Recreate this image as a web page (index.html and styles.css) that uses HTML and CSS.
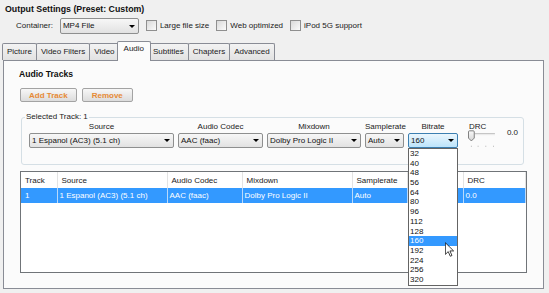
FILE: index.html
```html
<!DOCTYPE html>
<html>
<head>
    <title>Output Settings</title>
    <link rel="stylesheet" href="styles.css">
</head>
<body>
    <h1 class="section-title">Output Settings (Preset: Custom)</h1>
    <div class="container-row">
        <span class="field-label">Container:</span>
        <div class="combo combo-container">MP4 File</div>
        <label class="check"><span class="check-box"></span>Large file size</label>
        <label class="check"><span class="check-box"></span>Web optimized</label>
        <label class="check"><span class="check-box"></span>iPod 5G support</label>
    </div>

    <div class="tabs">
        <div class="tab">Picture</div>
        <div class="tab">Video Filters</div>
        <div class="tab">Video</div>
        <div class="tab active">Audio</div>
        <div class="tab">Subtitles</div>
        <div class="tab">Chapters</div>
        <div class="tab">Advanced</div>
    </div>

    <div class="tab-panel">
        <h2 class="panel-title">Audio Tracks</h2>
        <div class="track-buttons">
            <button class="btn">Add Track</button>
            <button class="btn btn-remove">Remove</button>
        </div>

        <fieldset class="track-group">
            <legend>Selected Track: 1</legend>
            <div class="track-fields">
                <div class="field field-source">
                    <span class="field-caption">Source</span>
                    <div class="combo">1 Espanol (AC3) (5.1 ch)</div>
                </div>
                <div class="field field-codec">
                    <span class="field-caption">Audio Codec</span>
                    <div class="combo">AAC (faac)</div>
                </div>
                <div class="field field-mixdown">
                    <span class="field-caption">Mixdown</span>
                    <div class="combo">Dolby Pro Logic II</div>
                </div>
                <div class="field field-rate">
                    <span class="field-caption">Samplerate</span>
                    <div class="combo">Auto</div>
                </div>
                <div class="field field-bitrate">
                    <span class="field-caption">Bitrate</span>
                    <div class="combo-wrap">
                        <div class="combo combo-open">160</div>
                        <ul class="dropdown">
                            <li>32</li>
                            <li>40</li>
                            <li>48</li>
                            <li>56</li>
                            <li>64</li>
                            <li>80</li>
                            <li>96</li>
                            <li>112</li>
                            <li>128</li>
                            <li class="selected">160</li>
                            <li>192</li>
                            <li>224</li>
                            <li>256</li>
                            <li>320</li>
                        </ul>
                        <svg class="cursor" width="9" height="15" viewBox="0 0 12 19">
                            <path d="M0.5 0.5 V16 L4.3 12.3 L7 18.5 L9.3 17.5 L6.6 11.4 H11.5 Z" fill="#fff" stroke="#000" stroke-width="1"/>
                        </svg>
                    </div>
                </div>
                <div class="field field-drc">
                    <span class="field-caption">DRC</span>
                    <div class="drc-row">
                        <svg width="30" height="19" viewBox="0 0 30 19">
                            <defs>
                                <linearGradient id="thumbFill" x1="0" y1="0" x2="0" y2="1">
                                    <stop offset="0" stop-color="#fafafa"/>
                                    <stop offset="1" stop-color="#d6d6d6"/>
                                </linearGradient>
                            </defs>
                            <line x1="7" y1="3.5" x2="28" y2="3.5" stroke="#b4b4b4"/>
                            <line x1="7" y1="4.5" x2="28" y2="4.5" stroke="#ebebeb"/>
                            <path d="M0.5 1.5 Q0.5 0.5 1.5 0.5 H5.5 Q6.5 0.5 6.5 1.5 V8 L3.5 11 L0.5 8 Z" fill="url(#thumbFill)" stroke="#7a7a7a"/>
                            <rect x="3" y="16" width="1" height="1" fill="#b0b0b0"/>
                            <rect x="10" y="16" width="1" height="1" fill="#b0b0b0"/>
                            <rect x="18" y="16" width="1" height="1" fill="#b0b0b0"/>
                            <rect x="26" y="16" width="1" height="1" fill="#b0b0b0"/>
                        </svg>
                        <span class="drc-value">0.0</span>
                    </div>
                </div>
            </div>
        </fieldset>

        <div class="track-list">
            <table>
                <colgroup>
                    <col style="width:36px">
                    <col style="width:110px">
                    <col style="width:75px">
                    <col style="width:110px">
                    <col style="width:55px">
                    <col style="width:56px">
                    <col>
                </colgroup>
                <tr>
                    <th>Track</th>
                    <th>Source</th>
                    <th>Audio Codec</th>
                    <th>Mixdown</th>
                    <th>Samplerate</th>
                    <th></th>
                    <th>DRC</th>
                </tr>
                <tr class="row-selected">
                    <td class="first">1</td>
                    <td>1 Espanol (AC3) (5.1 ch)</td>
                    <td>AAC (faac)</td>
                    <td>Dolby Pro Logic II</td>
                    <td>Auto</td>
                    <td></td>
                    <td>0.0</td>
                </tr>
            </table>
        </div>
    </div>
</body>
</html>
```

FILE: styles.css
```css
body {
    margin: 0;
    width: 549px;
    height: 293px;
    overflow: hidden;
    background-color: #f0f0f0;
    font-family: "Liberation Sans", Arial, sans-serif;
    font-size: 8px;
    color: #1a1a1a;
}

.section-title {
    margin: 0;
    padding: 4px 0 0 5px;
    font-size: 8.8px;
    line-height: 11px;
    font-weight: bold;
    color: #111;
}

.container-row {
    display: flex;
    align-items: center;
    height: 17px;
    margin-top: 2px;
    padding-left: 16px;
}

.field-label {
    margin-right: 7px;
}

.combo {
    position: relative;
    box-sizing: border-box;
    height: 15px;
    line-height: 13px;
    padding-left: 2px;
    border: 1px solid #8e8f8f;
    border-radius: 2px;
    background: linear-gradient(#f7f7f7, #e2e2e2);
    color: #111;
    white-space: nowrap;
    overflow: hidden;
}

.combo::after {
    content: "";
    position: absolute;
    right: 3px;
    top: 5px;
    border-left: 3px solid transparent;
    border-right: 3px solid transparent;
    border-top: 3px solid #000;
}

.combo-container {
    width: 79px;
    height: 16px;
    line-height: 14px;
    margin-right: 7px;
}

.combo-container::after {
    top: 6px;
}

.check {
    display: flex;
    align-items: center;
    margin-right: 7px;
}

.check-box {
    box-sizing: border-box;
    width: 11px;
    height: 11px;
    margin-right: 3px;
    border: 1px solid #8f8f8f;
    background: linear-gradient(135deg, #d9d9d9, #fbfbfb);
}

/* tabs */
.tabs {
    display: flex;
    align-items: flex-end;
    height: 19px;
    margin-top: 7px;
    padding-left: 2px;
}

.tab {
    box-sizing: border-box;
    height: 17px;
    line-height: 15px;
    padding: 0 4px;
    margin-right: -1px;
    border: 1px solid #898c95;
    border-bottom: none;
    border-radius: 2px 2px 0 0;
    background: linear-gradient(#f3f3f3, #e2e2e2);
}

.tab.active {
    position: relative;
    z-index: 1;
    height: 20px;
    line-height: 13px;
    margin: 0 -3px -1px -2px;
    padding: 0 6px;
    background: #fbfbfb;
}

.tab-panel {
    box-sizing: border-box;
    height: 229px;
    margin: 0 5px 0 3px;
    padding: 0 16px 0 15px;
    border: 1px solid #898c95;
    background: #fbfbfb;
}

.panel-title {
    margin: 8px 0 0;
    font-size: 8.6px;
    line-height: 11px;
    font-weight: bold;
    color: #111;
}

.track-buttons {
    display: flex;
    gap: 5px;
    margin-top: 8px;
    padding-left: 1px;
}

.btn {
    box-sizing: border-box;
    height: 14px;
    padding: 0 8px;
    border: 1px solid #a3a3a3;
    border-radius: 2px;
    background: linear-gradient(#f7f7f7, #dcdcdc);
    font-family: inherit;
    font-size: 8px;
    font-weight: bold;
    color: #e68a35;
}

.btn-remove {
    padding: 0 9px;
}

/* selected track group */
.track-group {
    min-width: 0;
    margin: 10px 3px 0 2px;
    padding: 0 0 15px 7px;
    border: 1px solid #d5dfe5;
    border-radius: 3px;
}

.track-group legend {
    margin-left: -4px;
    padding: 0 1px;
    line-height: 10px;
}

.track-fields {
    display: flex;
    gap: 4px;
}

.field {
    display: flex;
    flex-direction: column;
}

.field-caption {
    height: 10px;
    line-height: 10px;
    text-align: center;
}

.field > .combo {
    margin-top: 1px;
}

.field-source { width: 145px; }
.field-codec { width: 85px; }
.field-mixdown { width: 94px; }
.field-rate { width: 39px; }
.field-bitrate { width: 50px; }

.field-drc {
    width: 50px;
    margin-left: 6px;
}

.field-drc .field-caption {
    text-align: left;
    padding-left: 1px;
}

.combo-wrap {
    position: relative;
    margin-top: 1px;
}

.combo-open {
    border-color: #3c7fb1;
    background: linear-gradient(#eaf6fd, #bde4fb);
}

.dropdown {
    position: absolute;
    top: 100%;
    left: 0;
    z-index: 2;
    box-sizing: border-box;
    width: 100%;
    margin: 0;
    padding: 0;
    list-style: none;
    border: 1px solid #646464;
    background: #fff;
    color: #111;
}

.dropdown li {
    height: 9.7px;
    line-height: 9.7px;
    padding-left: 1px;
}

.dropdown .selected {
    background: #3399ff;
    color: #fff;
}

.cursor {
    position: absolute;
    left: 37px;
    top: 109px;
    z-index: 3;
}

.drc-row {
    display: flex;
    align-items: flex-start;
    margin-top: -2px;
}

.drc-value {
    margin: -2px 0 0 10px;
    line-height: 10px;
}

/* track list */
.track-list {
    box-sizing: border-box;
    height: 102px;
    margin: 6px 0 0 1px;
    border: 1px solid #707478;
    background: #fff;
}

.track-list table {
    width: 100%;
    border-collapse: collapse;
    table-layout: fixed;
}

.track-list th {
    height: 16px;
    padding: 0 0 0 4px;
    border-right: 1px solid #e3e3e3;
    font-weight: normal;
    text-align: left;
    white-space: nowrap;
    overflow: hidden;
}

.track-list td {
    height: 15px;
    padding: 0 0 0 2px;
    border-right: 1px solid #b9d9fb;
    white-space: nowrap;
    overflow: hidden;
}

.row-selected td {
    background: #3399ff;
    color: #fff;
}

.track-list td.first {
    padding-left: 4px;
}
```
